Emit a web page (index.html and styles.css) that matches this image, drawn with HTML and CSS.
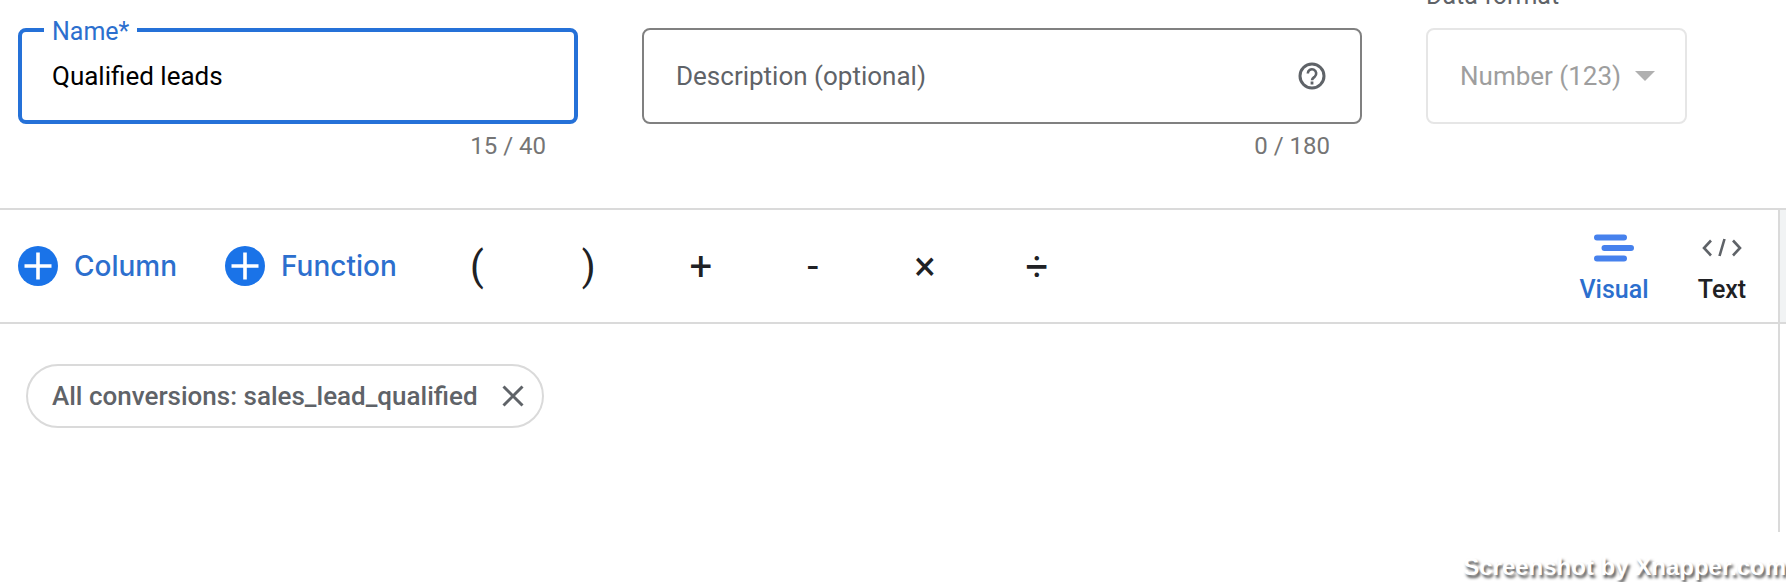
FILE: index.html
```html
<!DOCTYPE html>
<html lang="en">
<head>
<meta charset="utf-8">
<title>Custom column editor</title>
<link rel="stylesheet" href="styles.css">
</head>
<body>
<form class="details">
  <div class="field field-name">
    <div class="box box-focused">
      <label class="float-label" for="name">Name*</label>
      <input class="control control-name" id="name" type="text" value="Qualified leads" maxlength="40">
    </div>
    <div class="counter">15 / 40</div>
  </div>
  <div class="field field-description">
    <div class="box">
      <input class="control" id="description" type="text" placeholder="Description (optional)" aria-label="Description" maxlength="180">
      <button class="help" type="button" aria-label="Help">
        <svg width="28" height="28" viewBox="0 0 28 28" fill="none" stroke="currentColor" stroke-width="3">
          <circle cx="14" cy="14" r="12"/>
          <path stroke-width="2.6" d="M9.800 11.500a4.200 4.200 0 1 1 6.900 3.200c-1.500 1.200-2.700 1.900-2.700 3.500"/>
          <path d="M12.600 21h2.800"/>
        </svg>
      </button>
    </div>
    <div class="counter">0 / 180</div>
  </div>
  <div class="field field-format">
    <label class="top-label" for="format">Data format</label>
    <div class="box box-disabled">
      <select class="control control-format" id="format" disabled><option>Number (123)</option></select>
      <svg class="caret" width="20" height="10" viewBox="0 0 20 10"><path d="M0 0h20L10 10z" fill="currentColor"/></svg>
    </div>
  </div>
</form>

<section class="editor">
  <div class="toolbar">
    <div class="adders">
      <button class="add" type="button">
        <svg width="40" height="40" viewBox="0 0 40 40"><circle cx="20" cy="20" r="20" fill="#1a73e8"/><path d="M20 6.500v27M6.500 20h27" stroke="#fff" stroke-width="3.600"/></svg>
        Column
      </button>
      <button class="add" type="button">
        <svg width="40" height="40" viewBox="0 0 40 40"><circle cx="20" cy="20" r="20" fill="#1a73e8"/><path d="M20 6.500v27M6.500 20h27" stroke="#fff" stroke-width="3.600"/></svg>
        Function
      </button>
    </div>
    <div class="operators">
      <button class="operator" type="button">(</button>
      <button class="operator" type="button">)</button>
      <button class="operator" type="button">+</button>
      <button class="operator" type="button">-</button>
      <button class="operator" type="button">×</button>
      <button class="operator" type="button">÷</button>
    </div>
    <div class="modes">
      <button class="mode mode-active" type="button">
        <svg width="40" height="28" viewBox="0 0 40 28" stroke="#4681ed" stroke-width="6" stroke-linecap="round"><path d="M3 3.500h27M10.500 14H37M3 24.500h27"/></svg>
        Visual
      </button>
      <button class="mode" type="button">
        <svg width="40" height="28" viewBox="0 0 40 28" fill="none" stroke="#5f6368" stroke-width="2.600"><path d="M9 6.500L2 14l7 7.500M22.500 5l-5 17M31 6.500l7 7.500-7 7.500"/></svg>
        Text
      </button>
    </div>
  </div>
  <div class="toolbar-side"></div>
  <div class="formula">
    <div class="chip">
      <span>All conversions: sales_lead_qualified</span>
      <button class="chip-remove" type="button" aria-label="Remove">
        <svg width="22" height="22" viewBox="0 0 22 22" stroke="currentColor" stroke-width="3"><path d="M1.500 1.500l19 19M20.500 1.500l-19 19"/></svg>
      </button>
    </div>
  </div>
  <div class="formula-side"></div>
</section>

<footer class="credit">Screenshot by Xnapper.com</footer>
</body>
</html>
```
FILE: styles.css
```css
* {
  box-sizing: border-box;
}

body {
  margin: 0;
  overflow: hidden;
  background: #fff;
  color: #202124;
  font-family: Roboto, "Liberation Sans", sans-serif;
  font-size: 26px;
}

button,
input,
select {
  margin: 0;
  padding: 0;
  border: 0;
  background: none;
  color: inherit;
  font: inherit;
  outline: 0;
}

svg {
  display: block;
  flex: none;
}

/* Column details */

.details {
  display: flex;
  gap: 64px;
  margin-top: -18px;
  padding: 0 99px 0 18px;
}

.field {
  min-width: 0;
  padding-top: 46px;
}

.field-name {
  flex: 560 1 0;
}

.field-description {
  flex: 720 1 0;
}

.field-format {
  flex: 261 1 0;
  padding-top: 0;
}

.box {
  position: relative;
  display: flex;
  align-items: center;
  height: 96px;
  border: 2px solid #808080;
  border-radius: 8px;
  padding: 0 34px 0 32px;
}

.box-focused {
  border: 4px solid #2571d8;
  padding: 0 30px;
}

.box-disabled {
  border-color: #e6e6e6;
  padding-right: 30px;
  color: #9e9e9e;
}

.control {
  flex: 1;
  min-width: 0;
  height: 64px;
}

.control-name {
  color: #000;
}

.control::placeholder {
  color: #5f6368;
  opacity: 1;
}

.control-format {
  appearance: none;
  opacity: 1;
}

.caret {
  color: #b0b0b0;
}

.float-label {
  position: absolute;
  top: -14px;
  left: 22px;
  padding: 0 8px;
  background: #fff;
  color: #2c6fce;
  font-size: 25px;
  line-height: 28px;
}

.top-label {
  display: block;
  margin-bottom: 18px;
  color: #5f6368;
  font-size: 25px;
  line-height: 28px;
}

.help {
  color: #5f6368;
}

.counter {
  padding: 8px 32px 0;
  color: #757575;
  font-size: 24px;
  line-height: 28px;
  text-align: right;
}

/* Formula editor */

.editor {
  display: grid;
  grid-template-columns: 1fr 8px;
  grid-template-rows: 116px 208px;
  margin-top: 48px;
}

.toolbar {
  display: flex;
  align-items: center;
  border: solid #dadada;
  border-width: 2px 0;
  padding: 0 18px;
}

.toolbar-side {
  border: 2px solid #dadada;
  border-right: 0;
  background: #f1f3f4;
}

.formula-side {
  border-left: 2px solid #dadada;
}

.adders {
  display: flex;
  gap: 48px;
}

.add {
  display: flex;
  align-items: center;
  gap: 16px;
  color: #2c6fce;
  font-family: Inter, Roboto, sans-serif;
  font-size: 28px;
  font-weight: 500;
}

.operators {
  display: flex;
  gap: 32px;
  margin-left: 40px;
}

.operator {
  width: 80px;
  height: 80px;
  font-size: 40px;
}

.modes {
  display: flex;
  gap: 32px;
  margin-left: auto;
  padding-top: 6px;
}

.mode {
  display: flex;
  flex-direction: column;
  align-items: center;
  gap: 14px;
  min-width: 76px;
  font-size: 25px;
  font-weight: 500;
  line-height: 28px;
}

.mode-active {
  color: #2c6fce;
}

.formula {
  padding: 40px 26px;
}

.chip {
  display: inline-flex;
  align-items: center;
  gap: 24px;
  height: 64px;
  border: 2px solid #dadada;
  border-radius: 32px;
  padding: 0 18px 0 24px;
  color: #5f6368;
  font-weight: 500;
}

.credit {
  margin-top: 20px;
  color: #fff;
  font-family: "Liberation Sans", sans-serif;
  font-size: 24px;
  font-weight: 700;
  line-height: 30px;
  text-align: right;
  text-shadow: 2px 3px 3px #555;
  white-space: nowrap;
}
```
